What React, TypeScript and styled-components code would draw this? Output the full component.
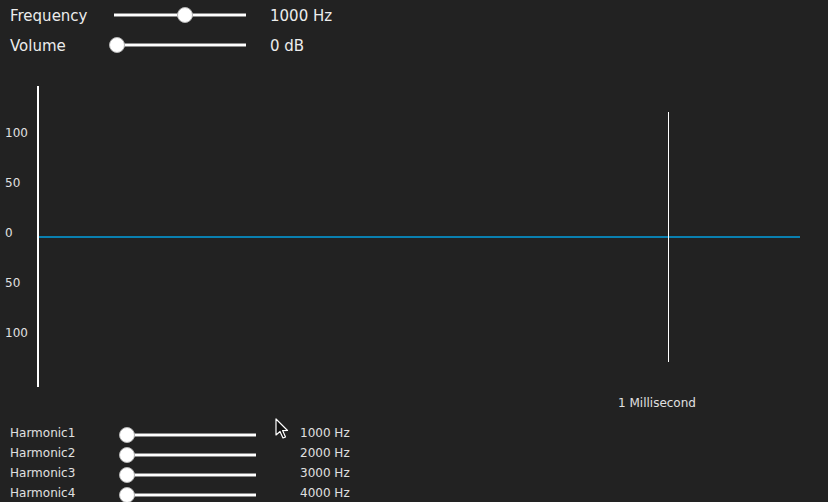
import styled, { createGlobalStyle } from 'styled-components';

const GlobalStyle = createGlobalStyle`
  html, body {
    margin: 0;
    padding: 0;
    background: #222222;
    font-family: 'DejaVu Sans', 'Liberation Sans', sans-serif;
    color: #e8e8e8;
  }
`;

interface ISliderProps {
  trackWidth: number;
  value: number; // 0..1
}

const Slider: React.FC<ISliderProps> = ({ trackWidth, value }) => (
  <SliderBox style={{ width: trackWidth }}>
    <Track />
    <Thumb style={{ left: `calc(3px + ${value} * (100% - 6px))` }} />
  </SliderBox>
);

const harmonics = [
  { name: 'Harmonic1', freq: '1000 Hz' },
  { name: 'Harmonic2', freq: '2000 Hz' },
  { name: 'Harmonic3', freq: '3000 Hz' },
  { name: 'Harmonic4', freq: '4000 Hz' },
];

const yLabels = [
  { text: '100', y: 77 },
  { text: '50', y: 127 },
  { text: '0', y: 177 },
  { text: '50', y: 227 },
  { text: '100', y: 277 },
];

const Cursor = () => (
  <CursorBox width="14" height="22" viewBox="0 0 14 22">
    <path
      d="M1 1 L1 17 L5 13.5 L8 20 L10.5 19 L7.6 12.6 L12.5 12.5 Z"
      fill="#111"
      stroke="#fff"
      strokeWidth="1.2"
      strokeLinejoin="round"
    />
  </CursorBox>
);

const App = () => {
  return (
    <Page>
      <GlobalStyle />
      <TopControls>
        <TopRow>
          <TopLabel>Frequency</TopLabel>
          <Slider trackWidth={132} value={0.54} />
          <TopValue>1000 Hz</TopValue>
        </TopRow>
        <TopRow>
          <TopLabel>Volume</TopLabel>
          <Slider trackWidth={132} value={0} />
          <TopValue>0 dB</TopValue>
        </TopRow>
      </TopControls>

      <Chart width="828" height="363" viewBox="0 0 828 363">
        {yLabels.map((l, i) => (
          <text key={i} x="5" y={l.y} fontSize="12" fill="#e0e0e0">
            {l.text}
          </text>
        ))}
        <line x1="38" y1="26" x2="38" y2="327" stroke="#ffffff" strokeWidth="2" />
        <line x1="39" y1="177" x2="800" y2="177" stroke="#0a80b0" strokeWidth="2" />
        <line x1="668.5" y1="52" x2="668.5" y2="302" stroke="#ffffff" strokeWidth="1" />
        <text x="618" y="347" fontSize="12" fill="#e0e0e0">
          1 Millisecond
        </text>
      </Chart>

      <Harmonics>
        {harmonics.map((h) => (
          <HarmonicRow key={h.name}>
            <HarmonicLabel>{h.name}</HarmonicLabel>
            <HarmonicSlider>
              <Slider trackWidth={132} value={0} />
            </HarmonicSlider>
            <HarmonicValue>{h.freq}</HarmonicValue>
          </HarmonicRow>
        ))}
        <Cursor />
      </Harmonics>
    </Page>
  );
};

const Page = styled.div`
  width: 828px;
  height: 502px;
  overflow: hidden;
  background: #222222;
`;

const TopControls = styled.div`
  display: flex;
  flex-direction: column;
`;

const TopRow = styled.div`
  display: grid;
  grid-template-columns: 104px 132px auto;
  align-items: center;
  height: 30px;
  padding-left: 10px;
`;

const TopLabel = styled.div`
  font-size: 15px;
  color: #ececec;
  padding-top: 2px;
`;

const TopValue = styled.div`
  font-size: 15px;
  color: #ececec;
  margin-left: 24px;
  padding-top: 2px;
`;

const SliderBox = styled.div`
  position: relative;
  height: 16px;
  display: flex;
  align-items: center;
`;

const Track = styled.div`
  width: 100%;
  height: 2px;
  background: #ffffff;
  border-top: 1px solid #8c8c8c;
  border-bottom: 1px solid #8c8c8c;
`;

const Thumb = styled.div`
  position: absolute;
  top: 50%;
  width: 14px;
  height: 14px;
  border-radius: 50%;
  background: #ffffff;
  border: 1px solid #b5b5b5;
  transform: translate(-50%, -50%);
`;

const Chart = styled.svg`
  display: block;
  font-family: 'DejaVu Sans', 'Liberation Sans', sans-serif;
`;

const Harmonics = styled.div`
  position: relative;
  display: flex;
  flex-direction: column;
`;

const HarmonicRow = styled.div`
  display: grid;
  grid-template-columns: 114px 132px auto;
  align-items: center;
  height: 20px;
  padding-left: 10px;
`;

const HarmonicLabel = styled.div`
  font-size: 12px;
  color: #e0e0e0;
`;

const HarmonicSlider = styled.div`
  margin-top: 4px;
`;

const HarmonicValue = styled.div`
  font-size: 12px;
  color: #e0e0e0;
  margin-left: 44px;
`;

const CursorBox = styled.svg`
  position: absolute;
  left: 275px;
  top: -5px;
`;

export default App;
